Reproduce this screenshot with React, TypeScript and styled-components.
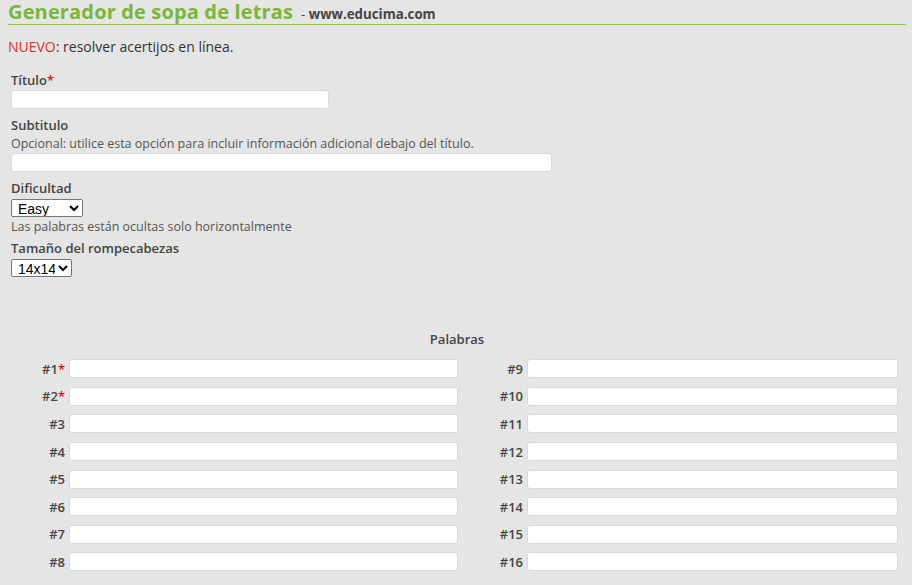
import styled, { createGlobalStyle } from 'styled-components';

const GlobalStyle = createGlobalStyle`
	html, body {
		margin: 0;
		padding: 0;
		background: #e5e5e5;
	}
	body {
		font-family: 'Open Sans', 'Noto Sans', sans-serif;
		color: #444;
	}
	* {
		box-sizing: border-box;
	}
`;

const LEFT_WORDS = [1, 2, 3, 4, 5, 6, 7, 8];
const REQUIRED = [1, 2];

function WordCell({ n }: { n: number }) {
	return (
		<>
			<WordLabel>
				#{n}
				{REQUIRED.includes(n) && <Req>*</Req>}
			</WordLabel>
			<WordCellBox>
				<TextInput type='text' />
			</WordCellBox>
		</>
	);
}

function App() {
	return (
		<StyledPage>
			<GlobalStyle />
			<StyledHeader>
				<StyledTitle>Generador de sopa de letras</StyledTitle>
				<StyledSite>
					- <b>www.educima.com</b>
				</StyledSite>
			</StyledHeader>
			<StyledNews>
				<NewTag>NUEVO</NewTag>: resolver acertijos en línea.
			</StyledNews>

			<StyledForm>
				<Field>
					<Label>
						Título<Req>*</Req>
					</Label>
					<TextInput type='text' $width={318} />
				</Field>
				<Field>
					<Label>Subtitulo</Label>
					<Hint>
						Opcional: utilice esta opción para incluir información adicional
						debajo del título.
					</Hint>
					<TextInput type='text' $width={541} />
				</Field>
				<Field $gap={2}>
					<Label>Dificultad</Label>
					<Select $width={72} defaultValue='easy'>
						<option value='easy'>Easy</option>
						<option value='medium'>Medium</option>
						<option value='hard'>Hard</option>
					</Select>
					<Hint>Las palabras están ocultas solo horizontalmente</Hint>
				</Field>
				<Field>
					<Label>Tamaño del rompecabezas</Label>
					<Select $width={61} defaultValue='14'>
						<option value='10'>10x10</option>
						<option value='14'>14x14</option>
						<option value='18'>18x18</option>
					</Select>
				</Field>

				<WordsHeading>Palabras</WordsHeading>
				<WordsGrid>
					{LEFT_WORDS.map((n) => (
						<WordRow key={n}>
							<WordCell n={n} />
							<WordCell n={n + 8} />
						</WordRow>
					))}
				</WordsGrid>
			</StyledForm>
		</StyledPage>
	);
}

const StyledPage = styled.main`
	width: 100vw;
	min-height: 100vh;
	padding: 0 6px 0 8px;
`;

const StyledHeader = styled.header`
	display: flex;
	align-items: baseline;
	height: 25px;
	border-bottom: 1px solid #8cc63f;
	white-space: nowrap;
`;

const StyledTitle = styled.h1`
	margin: -2px 0 0;
	font-size: 20px;
	line-height: 27px;
	letter-spacing: 0.15px;
	font-weight: 700;
	color: #7cb53c;
`;

const StyledSite = styled.span`
	margin-left: 8px;
	font-size: 13.3px;
	line-height: 24px;
	color: #444;
	b {
		font-weight: 700;
	}
`;

const StyledNews = styled.p`
	margin: 11px 0 0;
	font-size: 14px;
	line-height: 22px;
	color: #333;
`;

const NewTag = styled.span`
	color: #e52b2b;
`;

const StyledForm = styled.form`
	padding: 12px 0 0 3px;
	display: flex;
	flex-direction: column;
`;

const Field = styled.div<{ $gap?: number }>`
	display: flex;
	flex-direction: column;
	align-items: flex-start;
	margin-bottom: ${(p) => p.$gap ?? 6}px;
`;

const Label = styled.label`
	font-size: 13px;
	font-weight: 600;
	line-height: 20px;
	color: #444;
`;

const Hint = styled.span`
	font-size: 12.5px;
	line-height: 18px;
	color: #555;
	select + & {
		margin-top: 1px;
	}
`;

const Req = styled.span`
	color: #d11;
`;

const TextInput = styled.input<{ $width?: number }>`
	width: ${(p) => (p.$width ? `${p.$width}px` : '100%')};
	height: 19px;
	padding: 0 4px;
	background: #fff;
	border: 1px solid #dadada;
	border-radius: 3px;
	font-family: 'Liberation Sans', sans-serif;
	font-size: 13px;
	margin: 0;
	outline: none;
`;

const Select = styled.select<{ $width: number }>`
	width: ${(p) => p.$width}px;
	height: 18px;
	margin-top: 1px;
	padding: 0 0 0 2px;
	font-family: 'Liberation Sans', Arial, sans-serif;
	font-size: 14px;
	color: #000;
	background: #fff;
	border: 1px solid #767676;
	border-radius: 2px;
`;

const WordsHeading = styled.div`
	margin-top: 47px;
	text-align: center;
	font-size: 13px;
	font-weight: 600;
	line-height: 18px;
	color: #444;
	padding-right: 3px;
`;

const WordsGrid = styled.div`
	margin: 7px 0 0 -3px;
	display: grid;
	grid-template-columns: 61px 389px 69px 371px;
`;

const WordRow = styled.div`
	display: contents;
`;

const WordLabel = styled.div`
	height: 27.6px;
	display: flex;
	align-items: center;
	justify-content: flex-end;
	padding-right: 4px;
	font-size: 13px;
	font-weight: 600;
	color: #444;
`;

const WordCellBox = styled.div`
	height: 27.6px;
	display: flex;
	align-items: center;
`;

export default App;
